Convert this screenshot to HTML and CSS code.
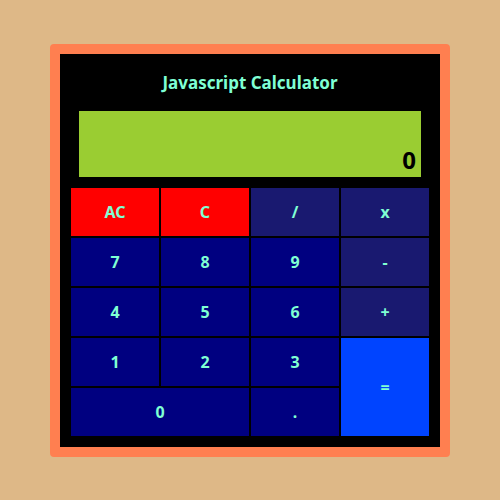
FILE: index.html
```html
<!DOCTYPE html>
<html>
<head>
<meta charset="utf-8">
<link rel="stylesheet" href="styles.css">
</head>
<body>
<div class="calc">
  <div class="title">Javascript Calculator</div>
  <div class="display"><span class="value">0</span></div>
  <div class="keys">
    <div class="key clear">AC</div>
    <div class="key clear">C</div>
    <div class="key op">/</div>
    <div class="key op">x</div>
    <div class="key num">7</div>
    <div class="key num">8</div>
    <div class="key num">9</div>
    <div class="key op">-</div>
    <div class="key num">4</div>
    <div class="key num">5</div>
    <div class="key num">6</div>
    <div class="key op">+</div>
    <div class="key num">1</div>
    <div class="key num">2</div>
    <div class="key num">3</div>
    <div class="key equals">=</div>
    <div class="key num zero">0</div>
    <div class="key num">.</div>
  </div>
</div>
</body>
</html>
```
FILE: styles.css
```css
html, body {
  margin: 0;
  padding: 0;
}
body {
  background: #deb887;
  width: 500px;
  height: 500px;
  font-family: "Noto Sans", "Open Sans", sans-serif;
  font-weight: bold;
}
.calc {
  box-sizing: border-box;
  width: 400px;
  height: 413px;
  margin: 44px 0 0 50px;
  border: 10px solid #ff7f50;
  border-radius: 4px;
  background: #000;
  padding: 0 11px 11px 11px;
  display: flex;
  flex-direction: column;
}
.title {
  height: 57px;
  display: flex;
  align-items: center;
  justify-content: center;
  color: #7fffd4;
  font-size: 17px;
  padding-bottom: 1px;
  box-sizing: border-box;
}
.display {
  margin: 0 8px 11px 8px;
  height: 66px;
  background: #9acd32;
  display: flex;
  align-items: flex-end;
  justify-content: flex-end;
  padding: 0 5px 1px 0;
  box-sizing: border-box;
}
.value {
  font-size: 24px;
  color: #000;
  line-height: 32px;
}
.keys {
  display: grid;
  grid-template-columns: repeat(4, 88px);
  grid-template-rows: repeat(5, 48px);
  gap: 2px;
}
.key {
  display: flex;
  align-items: center;
  justify-content: center;
  color: #7fffd4;
  font-size: 16px;
}
.clear { background: #ff0000; }
.op { background: #191970; }
.num { background: #000080; }
.equals {
  background: #0044ff;
  grid-column: 4;
  grid-row: 4 / span 2;
}
.zero { grid-column: 1 / span 2; }
```
